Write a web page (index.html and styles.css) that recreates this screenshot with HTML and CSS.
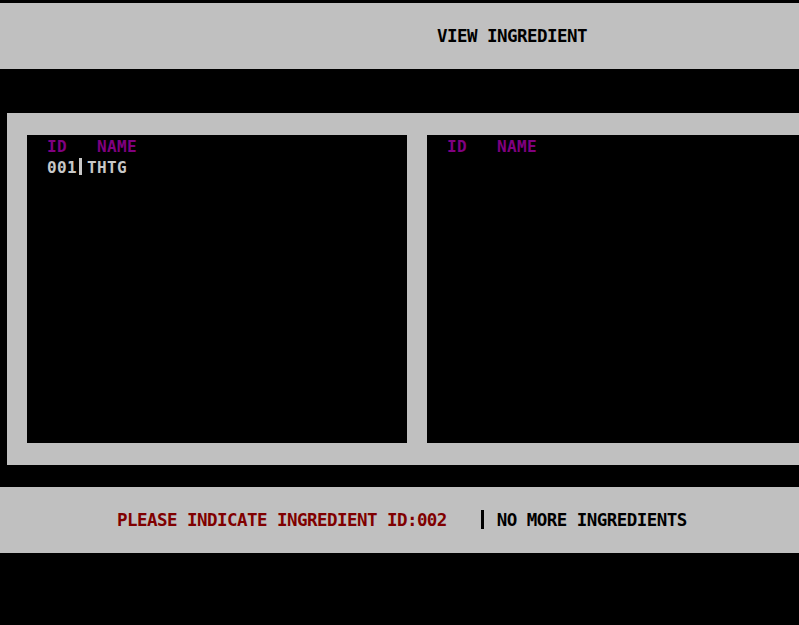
FILE: index.html
```html
<!DOCTYPE html>
<html>
<head>
<meta charset="utf-8">
<title>View Ingredient</title>
<link rel="stylesheet" href="styles.css">
</head>
<body>
<header class="bar-header"><span class="title">VIEW INGREDIENT</span></header>
<main class="panel">
  <section class="list">
    <div class="list-head">ID   NAME</div>
    <div class="list-row">001<span class="sep"></span>THTG</div>
  </section>
  <section class="list">
    <div class="list-head">ID   NAME</div>
  </section>
</main>
<footer class="bar-footer"><span class="prompt">PLEASE INDICATE INGREDIENT ID:002   </span><span class="fsep"></span><span class="msg"> NO MORE INGREDIENTS</span></footer>
</body>
</html>
```
FILE: styles.css
```css
html, body {
  margin: 0;
  padding: 0;
  background: #000;
  width: 799px;
  height: 625px;
  overflow: hidden;
}
body {
  padding-top: 3px;
  box-sizing: border-box;
  font-family: "DejaVu Sans Mono", "Liberation Mono", monospace;
  font-weight: bold;
}
.bar-header,
.bar-footer {
  background: #c0c0c0;
  height: 66px;
  box-sizing: border-box;
  padding-top: 23px;
  font-size: 17.5px;
  line-height: 20px;
  letter-spacing: -0.54px;
  white-space: pre;
  color: #000;
}
.bar-header {
  padding-left: 437px;
}
.bar-footer {
  margin-top: 22px;
  padding-left: 117px;
}
.prompt {
  color: #800000;
}
.fsep {
  display: inline-block;
  width: 3px;
  height: 19px;
  background: #000;
  margin: 0 3px 0 4px;
  vertical-align: -3px;
}
.panel {
  margin-top: 44px;
  margin-left: 7px;
  background: #c0c0c0;
  display: flex;
  gap: 20px;
  padding: 22px 0 22px 20px;
  overflow: hidden;
}
.list {
  flex: none;
  width: 380px;
  height: 308px;
  background: #000;
  box-sizing: border-box;
  padding: 2px 0 0 20px;
  font-size: 16px;
  line-height: 20px;
  letter-spacing: 0.37px;
}
.list-head,
.list-row {
  white-space: pre;
}
.list-head {
  color: #800080;
}
.list-row {
  color: #c8c8c8;
  margin-top: 1px;
}
.sep {
  display: inline-block;
  width: 3px;
  height: 17px;
  background: #c8c8c8;
  margin: 0 5px 0 2px;
  vertical-align: -2px;
}
```
